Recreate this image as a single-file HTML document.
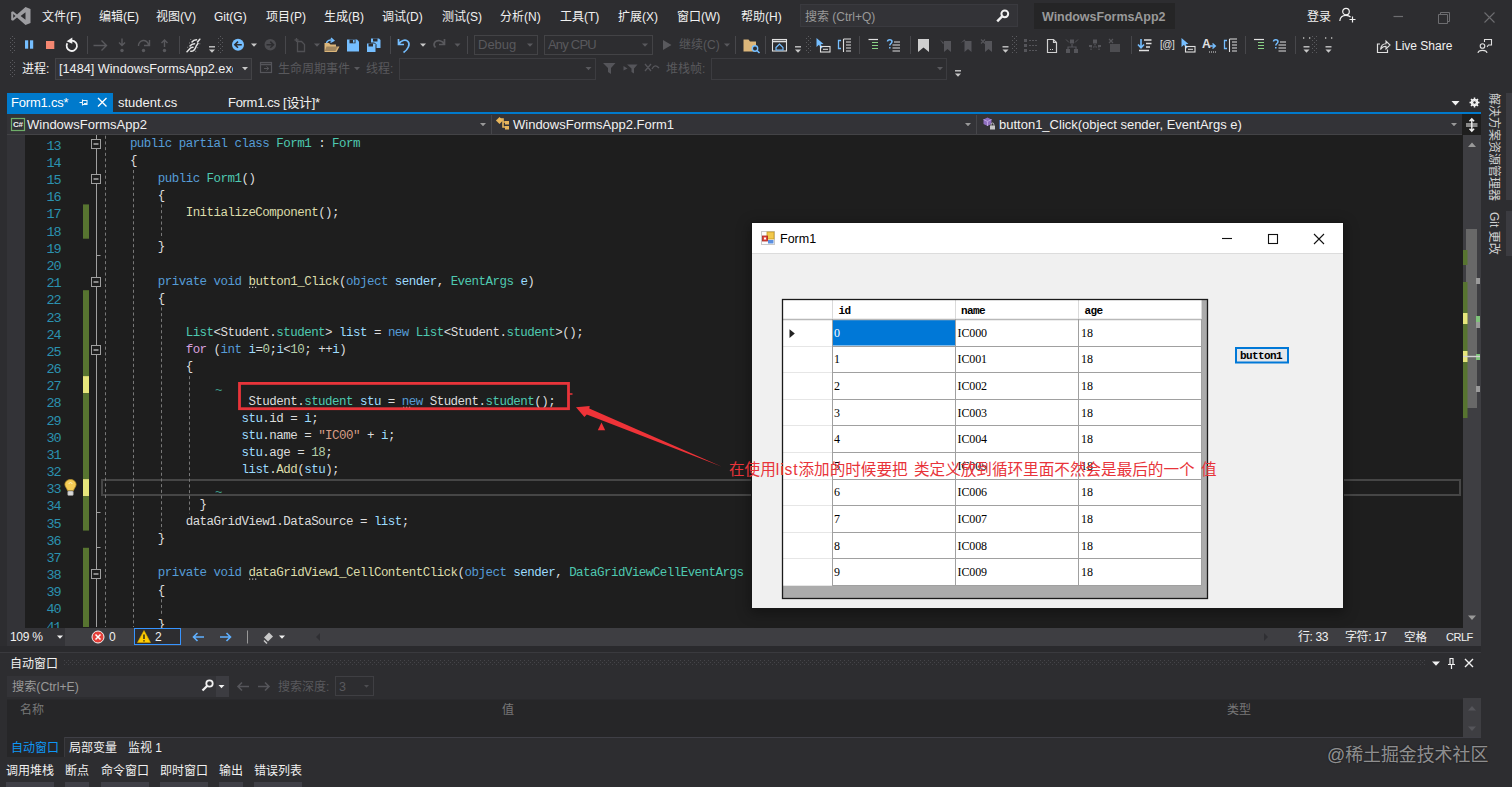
<!DOCTYPE html>
<html lang="zh-CN">
<head>
<meta charset="utf-8">
<title>Form1.cs - WindowsFormsApp2</title>
<style>
*{box-sizing:border-box;margin:0;padding:0}
html,body{width:1512px;height:787px;overflow:hidden}
body{background:#2d2d30;position:relative;font-family:"Liberation Sans","Noto Sans CJK SC",sans-serif;font-size:12px;color:#f1f1f1}
.abs{position:absolute}
.t{position:absolute;white-space:nowrap;line-height:16px}
/* menu */
#menubar .t{top:9px;font-size:12px;color:#f1f1f1}
/* editor */
#editor{position:absolute;left:25px;top:135px;width:1438px;height:493px;background:#1e1e1e;overflow:hidden}
#margin{position:absolute;left:7px;top:135px;width:18px;height:493px;background:#333337}
.ln{position:absolute;left:0;width:35.5px;text-align:right;color:#2b91af;font-family:"Liberation Mono",monospace;font-size:13.5px;letter-spacing:-1.1px;line-height:17px;height:17px}
.cl{position:absolute;left:0;white-space:pre;color:#dcdcdc;font-family:"Liberation Mono",monospace;font-size:12.5px;letter-spacing:-0.53px;line-height:17px;height:17px}
.k{color:#569cd6}.ty{color:#4ec9b0}.v{color:#9cdcfe}.s{color:#d69d85}.n{color:#b5cea8}.m{color:#dcdcaa}.c{color:#d8a0df}
</style>
</head>
<body>
<div id="menubar" class="abs" style="left:0;top:0;width:1512px;height:33px">
<svg class="abs" style="left:10px;top:6px" width="22" height="20" viewBox="0 0 22 20"><path d="M15.5 1 L20.5 3 V17 L15.5 19 L7 11.6 L3 14.8 L1.2 13.9 V6.1 L3 5.2 L7 8.4 Z M15.5 6.3 L10.6 10 L15.5 13.7 Z M3.2 7.9 V12.1 L5.5 10 Z" fill="#9d9da1" fill-rule="evenodd"/></svg>
<div class="t" style="left:42px">文件(F)</div>
<div class="t" style="left:99px">编辑(E)</div>
<div class="t" style="left:156px">视图(V)</div>
<div class="t" style="left:214px">Git(G)</div>
<div class="t" style="left:266px">项目(P)</div>
<div class="t" style="left:324px">生成(B)</div>
<div class="t" style="left:382px">调试(D)</div>
<div class="t" style="left:442px">测试(S)</div>
<div class="t" style="left:500px">分析(N)</div>
<div class="t" style="left:560px">工具(T)</div>
<div class="t" style="left:618px">扩展(X)</div>
<div class="t" style="left:677px">窗口(W)</div>
<div class="t" style="left:741px">帮助(H)</div>
<div class="abs" style="left:800px;top:4px;width:218px;height:23px;background:#333337;border:1px solid #3a3a3f"></div>
<div class="t" style="left:805px;color:#999">搜索 (Ctrl+Q)</div>
<svg class="abs" style="left:995px;top:8px" width="16" height="16" viewBox="0 0 16 16"><circle cx="9.8" cy="5.8" r="3.4" fill="none" stroke="#f1f1f1" stroke-width="2"/><path d="M7.4 8.2 L2.2 13.4" stroke="#f1f1f1" stroke-width="2.4"/></svg>
<div class="abs" style="left:1034px;top:3px;width:141px;height:26px;background:#252526"></div>
<div class="t" style="left:1042px;color:#999;font-weight:bold;font-size:12.5px;letter-spacing:-0.05px">WindowsFormsApp2</div>
<div class="t" style="left:1307px">登录</div>
<svg class="abs" style="left:1338px;top:6px" width="20" height="18" viewBox="0 0 20 18"><circle cx="8" cy="5.6" r="3.3" fill="none" stroke="#f1f1f1" stroke-width="1.2"/><path d="M1.8 15 C2.2 10.5 5 9.4 8 9.4 C10 9.4 11.6 10 12.6 11.2" fill="none" stroke="#f1f1f1" stroke-width="1.2"/><path d="M14.5 10.5 V16.5 M11.5 13.5 H17.5" stroke="#f1f1f1" stroke-width="1.2"/></svg>
<svg class="abs" style="left:1385px;top:6px" width="120" height="22" viewBox="0 0 120 22"><path d="M8.5 10.5 H18" stroke="#6d6d70" stroke-width="1.2"/><path d="M53.500 8.500 h9 v9 h-9 z M55.500 8.500 v-2 h9 v9 h-2" fill="none" stroke="#6d6d70" stroke-width="1"/><path d="M99.500 6.500 L109.500 16.500 M109.500 6.500 L99.500 16.500" stroke="#6d6d70" stroke-width="1.1"/></svg>
</div>

<div id="tb1" class="abs" style="left:0;top:33px;width:1512px;height:25px">
<svg class="abs" style="left:0;top:0" width="1512" height="25" viewBox="0 33 1512 25">
<defs>
<pattern id="grip" x="0" y="0" width="4" height="4" patternUnits="userSpaceOnUse"><rect x="0" y="0" width="1" height="1" fill="#5a5a5e"/><rect x="2" y="2" width="1" height="1" fill="#5a5a5e"/></pattern>
<g id="ovf"><path d="M0.500 0.300 H6.500" stroke="#c8c8c8" stroke-width="1.400"/><path d="M0.500 3 H6.500 L3.500 6.300 Z" fill="#c8c8c8"/></g>
<g id="dd"><path d="M0 0 H6 L3 3.300 Z" fill="#c8c8c8"/></g>
<g id="ddg"><path d="M0 0 H6 L3 3.300 Z" fill="#59595d"/></g>
</defs>
<!-- grips -->
<rect x="10" y="36" width="6" height="18" fill="url(#grip)"/>
<rect x="218" y="36" width="6" height="18" fill="url(#grip)"/>
<rect x="805" y="36" width="6" height="18" fill="url(#grip)"/>
<rect x="1012" y="36" width="6" height="18" fill="url(#grip)"/>
<rect x="1312" y="36" width="6" height="18" fill="url(#grip)"/>
<!-- separators -->
<g stroke="#47474b" stroke-width="1"><path d="M87.500 36 V54 M179.500 36 V54 M285.500 36 V54 M390.500 36 V54 M467.500 36 V54 M735.500 36 V54 M765.500 36 V54 M859.500 36 V54 M910.500 36 V54 M1131.500 36 V54 M1245.500 36 V54 M1295.500 36 V54"/></g>
<!-- pause stop restart -->
<rect x="25" y="40.300" width="3.200" height="8.400" fill="#75beff"/><rect x="30" y="40.300" width="3.200" height="8.400" fill="#75beff"/>
<rect x="46" y="41" width="8.300" height="8" fill="#f48771"/>
<path d="M67.300 43.200 A5.200 5.200 0 1 0 71.800 40.600" fill="none" stroke="#f1f1f1" stroke-width="1.800"/><path d="M72.300 37.400 V43.800 L66.600 41.200 Z" fill="#f1f1f1"/>
<!-- step icons (gray) -->
<g stroke="#59595d" stroke-width="1.400" fill="none"><path d="M93.500 45.500 H106.500 M101.500 40.500 L106.500 45.500 L101.500 50.500"/><path d="M122 38.500 V45 M119 42.500 L122 45.500 L125 42.500"/><path d="M138.500 46 A5 5 0 0 1 148.500 45 M149.500 40 V45.500 H144"/><path d="M164.500 47 V40 M161.500 43 L164.500 40 L167.500 43"/></g>
<g fill="#59595d"><circle cx="122" cy="50.500" r="1.700"/><circle cx="143.500" cy="50.500" r="1.700"/><circle cx="164.500" cy="50.500" r="1.700"/></g>
<!-- hatched icon -->
<g stroke="#e4e4e4" stroke-width="1.500" fill="none" stroke-linecap="round"><path d="M192 42 Q193.500 39.800 196.500 39.800 M197.500 42 L199.800 39.200"/><path d="M190 46 Q191.500 43.800 194.500 43.800 M196 46.300 L198 43.300"/><path d="M187 51.800 L190.500 48 Q191.500 47.200 193 47.200 M190.800 51.300 Q194 51.500 195.800 47.200"/></g><g fill="#8a8a8a"><rect x="190.200" y="39" width="1" height="1"/><rect x="189" y="42.500" width="1" height="1"/><rect x="187.200" y="46.800" width="1" height="1"/><rect x="199.300" y="43.300" width="1" height="1"/><rect x="197.200" y="47.200" width="1" height="1"/><rect x="195.200" y="50.800" width="1" height="1"/></g>
<use href="#ovf" x="208.500" y="46.500"/>
<!-- nav back/forward -->
<circle cx="238" cy="44.700" r="6" fill="#75beff"/><path d="M241.800 44.700 H235 M238 41.600 L234.800 44.700 L238 47.800" stroke="#2d2d30" stroke-width="1.600" fill="none"/>
<use href="#dd" x="251" y="43.500"/>
<circle cx="270.300" cy="44.700" r="5.800" fill="#4c4c50"/><path d="M266.500 44.700 H273.300 M270.300 41.600 L273.500 44.700 L270.300 47.800" stroke="#2d2d30" stroke-width="1.600" fill="none"/>
<!-- new item gray -->
<g fill="none" stroke="#505054" stroke-width="1.300"><path d="M297.500 41.500 h4 l3 3 v7 h-7 z"/><path d="M294.500 40 h4 M296.500 38 v4"/></g>
<use href="#ddg" x="314" y="43.500"/>
<!-- open folder -->
<path d="M324.500 52 V43 H329 L330.500 44.500 H336 V46.500 H339.500 L336.500 52 Z" fill="#dcb67a"/><path d="M326.500 46.500 H338 L335.500 51 H324.800 Z" fill="#2d2d30" opacity="0.350"/><path d="M326.500 43 C327 40.500 330 39.300 332.500 40.300 M331 38 L333.800 40.600 L330.500 42.300" stroke="#75beff" stroke-width="1.400" fill="none"/>
<!-- save -->
<path d="M347 39.500 H357 L359 41.500 V51.500 H347 Z" fill="#75beff"/><rect x="349.500" y="39.500" width="6" height="3.800" fill="#2d2d30"/><rect x="353" y="40" width="1.600" height="2.600" fill="#75beff"/><rect x="349.500" y="46.500" width="7" height="5" fill="#2d2d30" opacity="0"/>
<!-- save all -->
<path d="M371 38.500 H379 L380.500 40 V48 H371 Z" fill="#75beff"/><rect x="373" y="38.500" width="4.500" height="3" fill="#2d2d30"/>
<path d="M366.500 43 H374.500 L376 44.500 V52.500 H366.500 Z" fill="#75beff" stroke="#2d2d30" stroke-width="1"/><rect x="368.500" y="43.500" width="4.500" height="3" fill="#2d2d30"/>
<!-- undo / redo -->
<path d="M398.500 39 V44.500 H404 M398.800 44.200 C400.500 40.500 405.500 38.800 408 41.500 C410.500 44.500 408 49.500 403.500 52.500" stroke="#75beff" stroke-width="1.700" fill="none"/>
<use href="#dd" x="420" y="43.500"/>
<path d="M444.500 39 V44.500 H439 M444.200 44.200 C442.500 40.500 437.500 39.500 435 42 C433.500 44 434 46 435.500 47.500" stroke="#59595d" stroke-width="1.700" fill="none"/>
<use href="#ddg" x="454.500" y="43.500"/>
<!-- combos -->
<rect x="474.500" y="35.500" width="63" height="19" fill="#2d2d30" stroke="#434346"/><use href="#ddg" x="527" y="43.500"/>
<rect x="544.500" y="35.500" width="108" height="19" fill="#2d2d30" stroke="#434346"/><use href="#ddg" x="642" y="43.500"/>
<path d="M663 40 L671.500 45 L663 50 Z" fill="#59595d"/>
<use href="#ddg" x="724" y="43.500"/>
<!-- folder search -->
<path d="M743.500 51.500 V39.500 H748.500 L750 41.500 H756 V51.500 Z" fill="#dcb67a"/><circle cx="755" cy="48.500" r="2.700" fill="#2d2d30" stroke="#75beff" stroke-width="1.400"/><path d="M757 50.500 L759.500 53" stroke="#75beff" stroke-width="1.600"/>
<!-- window/home icon -->
<rect x="772.500" y="39.500" width="14" height="11.500" fill="none" stroke="#e0e0e0" stroke-width="1.100"/><path d="M772.500 41.500 H786.500" stroke="#e0e0e0" stroke-width="1.600"/><path d="M776 47.500 L779.500 44 L783 47.500 V50 H776 Z" fill="none" stroke="#75beff" stroke-width="1.200"/>
<use href="#ovf" x="794.500" y="46.500"/>
<!-- cursor + box -->
<path d="M816.500 38 V47 L819 44.800 L821 48.500 L822.500 47.800 L820.700 44.200 L823.500 44 Z" fill="#75beff"/><rect x="820.500" y="46.500" width="9.500" height="5.500" fill="none" stroke="#e0e0e0" stroke-width="1.100"/><path d="M823 49.300 H828" stroke="#e0e0e0"/>
<!-- bracket list -->
<path d="M841 40.500 H838.500 V48.500 H841" fill="none" stroke="#75beff" stroke-width="1.300"/><path d="M843.500 39 H851 M846 42 H851 M846 45 H851 M846 48 H851 M846 51 H851 M843.500 39 V52" stroke="#e0e0e0" stroke-width="1.100" fill="none"/>
<!-- indent -->
<path d="M868.500 39.500 H878 " stroke="#e0e0e0" stroke-width="1.200"/><path d="M872 42.500 H878 M872 45.500 H878 M872 48.500 H878" stroke="#89d185" stroke-width="1.200"/><path d="M868.500 51 H878" stroke="#e0e0e0" stroke-width="0"/>
<!-- ? list -->
<path d="M887.500 41.500 C887.500 39 892 39 892 41.500 C892 43.500 889.800 43.500 889.800 45.500 M889.800 47 V48.500" stroke="#75beff" stroke-width="1.500" fill="none"/><path d="M894 42 H900 M892.500 45 H900 M892.500 48 H900 M892.500 51 H900" stroke="#e0e0e0" stroke-width="1.200"/>
<!-- bookmarks -->
<path d="M918 39 H929 V52 L923.500 47.500 L918 52 Z" fill="#d0d0d0"/>
<g fill="#55555a"><path d="M944 41 H951 V52 L947.500 49 L944 52 Z"/><path d="M940 39.500 l4 3.500 l-1 1 z M964.500 41 H971.500 V52 L968 49 L964.500 52 Z"/><path d="M960.500 43 l4 -3.500 l1 1 z M985 41 H992 V52 L988.500 49 L985 52 Z"/><path d="M981 39.500 l4 4 M985 39.500 l-4 4" stroke="#55555a" stroke-width="1.200"/></g>
<use href="#ovf" x="1002" y="46.500"/>
<!-- gray list icon -->
<g fill="#55555a"><rect x="1024" y="39" width="3" height="3"/><rect x="1024" y="44" width="3" height="3"/><rect x="1024" y="49" width="3" height="3"/></g><path d="M1029 40.500 H1037.500 M1029 45.500 H1037.500 M1029 50.500 H1037.500" stroke="#55555a" stroke-width="1.200" stroke-dasharray="2 1"/>
<!-- doc icon -->
<path d="M1047.500 39.500 H1053.500 L1056.500 42.500 V52.500 H1047.500 Z M1053.500 39.500 V42.500 H1056.500" fill="none" stroke="#d0d0d0" stroke-width="1.200"/><path d="M1050 49.500 H1054" stroke="#d0d0d0" stroke-dasharray="1 1"/>
<!-- gray tree icons -->
<g fill="none" stroke="#55555a" stroke-width="1.200"><path d="M1072 44 V47 M1068 50 V47 H1076 V50"/><path d="M1095 44 V47 M1091 50 V47 H1099 V50" stroke-dasharray="1.500 1"/></g>
<g fill="#55555a"><rect x="1070" y="39.500" width="4" height="4"/><rect x="1066" y="49" width="4" height="4"/><rect x="1074" y="49" width="4" height="4"/><path d="M1066 39.500 l3 3 M1078 39.500 l-3 3" stroke="#55555a"/>
<rect x="1093" y="39.500" width="4" height="4"/><rect x="1089" y="45" width="3" height="2"/><rect x="1098" y="45" width="3" height="2"/>
<rect x="1110" y="44" width="10" height="8" opacity="0.800"/><path d="M1109 39 l4 4 M1113 39 l-4 4" stroke="#55555a" stroke-width="1.200"/></g>
<!-- right group -->
<path d="M1141 39 V47 M1138 44.500 L1141 47.800 L1144 44.500" stroke="#75beff" stroke-width="1.600" fill="none"/><path d="M1144 40 H1151.500 M1146 43.500 H1151.500 M1146 47 H1150 M1139 50.500 H1149" stroke="#e0e0e0" stroke-width="1.400"/>
<path d="M1181.500 38 V47 L1184 44.800 L1186 48.500 L1187.500 47.800 L1185.700 44.200 L1188.500 44 Z" fill="#75beff"/><rect x="1185.500" y="46.500" width="9.500" height="5.500" fill="none" stroke="#e0e0e0" stroke-width="1.100"/><path d="M1188 49.300 H1193" stroke="#e0e0e0"/>
<path d="M1209.500 46 H1215 M1212.500 43.500 L1215.300 46 L1212.500 48.500" stroke="#75beff" stroke-width="1.400" fill="none"/><path d="M1209 52 H1216" stroke="#e0e0e0" stroke-dasharray="1 1"/>
<path d="M1227 40.500 H1224.500 V48.500 H1227" fill="none" stroke="#75beff" stroke-width="1.300"/><path d="M1229.500 39 H1237 M1232 42 H1237 M1232 45 H1237 M1232 48 H1237 M1232 51 H1237 M1229.500 39 V52" stroke="#e0e0e0" stroke-width="1.100" fill="none"/>
<path d="M1254 39.500 H1264" stroke="#e0e0e0" stroke-width="1.200"/><path d="M1258 42.500 H1264 M1258 45.500 H1264 M1258 48.500 H1264" stroke="#89d185" stroke-width="1.200"/>
<path d="M1273.500 41.500 C1273.500 39 1278 39 1278 41.500 C1278 43.500 1275.800 43.500 1275.800 45.500 M1275.800 47 V48.500" stroke="#75beff" stroke-width="1.500" fill="none"/><path d="M1280 42 H1286 M1278.500 45 H1286 M1278.500 48 H1286 M1278.500 51 H1286" stroke="#e0e0e0" stroke-width="1.200"/>
<!-- overflow with dots -->
<g fill="#9a9a9a"><rect x="1303" y="37" width="1.300" height="2"/><rect x="1309" y="37" width="1.300" height="2"/><rect x="1325" y="37" width="1.300" height="2"/><rect x="1331" y="37" width="1.300" height="2"/></g>
<use href="#ovf" x="1303" y="46.500"/><use href="#ovf" x="1325" y="46.500"/>
<!-- live share -->
<path d="M1380 44 H1377.500 V52.500 H1387.500 V49.500" fill="none" stroke="#e0e0e0" stroke-width="1.200"/><path d="M1380.500 49.500 C1381 45.500 1383.500 43.800 1386 43.800 V41 L1390 45 L1386 49 V46.300 C1384 46.300 1382 47 1380.500 49.500 Z" fill="none" stroke="#e0e0e0" stroke-width="1.100"/>
<!-- feedback -->
<circle cx="1482.500" cy="46" r="2.300" fill="none" stroke="#e0e0e0" stroke-width="1.100"/><path d="M1478 53 C1478.500 49.500 1486.500 49.500 1487 53" fill="none" stroke="#e0e0e0" stroke-width="1.100"/><path d="M1484.500 42 V39.500 H1491.500 V45 H1488.500 L1487 46.800" fill="none" stroke="#e0e0e0" stroke-width="1.100"/>
</svg>
<div class="t" style="left:478px;top:4px;color:#59595d;font-size:13px">Debug</div>
<div class="t" style="left:548px;top:4px;color:#59595d;font-size:13px;letter-spacing:-0.8px">Any CPU</div>
<div class="t" style="left:679px;top:4px;color:#59595d;font-size:12px">继续(C)</div>
<div class="t" style="left:1160px;top:4px;color:#e0e0e0;font-size:10px;letter-spacing:-0.5px">[@]</div>
<div class="t" style="left:1202px;top:3px;color:#e0e0e0;font-size:12px;font-weight:bold">A</div>
<div class="t" style="left:1395px;top:5px;color:#f1f1f1;font-size:12px">Live Share</div>
</div>

<div id="tb2" class="abs" style="left:0;top:58px;width:1512px;height:24px">
<svg class="abs" style="left:0;top:0" width="1512" height="24" viewBox="0 58 1512 24">
<rect x="10" y="60" width="6" height="18" fill="url(#grip)"/>
<rect x="55.500" y="58.500" width="196" height="21" fill="#333337" stroke="#434346"/><use href="#dd" x="242" y="67"/>
<rect x="399.500" y="58.500" width="196" height="21" fill="#2d2d30" stroke="#3c3c40"/><use href="#ddg" x="585.500" y="67"/>
<rect x="711.500" y="58.500" width="235" height="21" fill="#2d2d30" stroke="#3c3c40"/><use href="#ddg" x="937" y="67"/>
<!-- lifecycle icon -->
<rect x="260.500" y="62.500" width="11" height="10" fill="none" stroke="#55555a" stroke-width="1.200"/><path d="M260.500 64.500 H271.500" stroke="#55555a" stroke-width="1.500"/><path d="M264 68.500 H268.500 M266.500 66.500 L268.800 68.500 L266.500 70.500" stroke="#55555a" fill="none"/>
<use href="#ddg" x="354" y="67"/>
<!-- filters -->
<g fill="#55555a"><path d="M603 63 H615.500 L611 68 V74 L608 72 V68 Z"/><path d="M627 64.500 H637.500 L634 68.500 V73.500 L631.500 72 V68.500 Z"/><path d="M623.500 66 l4 2.500 l-4 2 z"/></g>
<path d="M645 64 L651 71 M651 64 L645 71 M652 69 C654 65 656 65 659 68" stroke="#55555a" stroke-width="1.300" fill="none"/>
<use href="#ovf" x="954.500" y="70.500"/>
</svg>
<div class="t" style="left:22px;top:3px;color:#f1f1f1;font-size:12px">进程:</div>
<div class="t" style="left:59px;top:3px;color:#f1f1f1;font-size:12.700px;width:174px;overflow:hidden">[1484] WindowsFormsApp2.exe</div>
<div class="t" style="left:278px;top:3px;color:#59595d;font-size:12px">生命周期事件</div>
<div class="t" style="left:366px;top:3px;color:#59595d;font-size:12px">线程:</div>
<div class="t" style="left:666px;top:3px;color:#59595d;font-size:12px">堆栈帧:</div>
</div>

<div id="tabs" class="abs" style="left:0;top:93px;width:1512px;height:21px">
<div class="abs" style="left:7px;top:0;width:106px;height:20px;background:#007acc"></div>
<div class="abs" style="left:7px;top:19px;width:1474px;height:2px;background:#007acc"></div>
<div class="t" style="left:11px;top:2px;font-size:13px;letter-spacing:-0.2px;color:#fff">Form1.cs*</div>
<div class="t" style="left:118px;top:2px;font-size:13px;color:#f1f1f1">student.cs</div>
<div class="t" style="left:228px;top:2px;font-size:13px;letter-spacing:-0.3px;color:#f1f1f1">Form1.cs [设计]*</div>
<svg class="abs" style="left:0;top:0" width="1512" height="21" viewBox="0 93 1512 21">
<path d="M82.500 99.500 V105.500 M82.500 100.500 H87 V104.500 H82.500 M87 103.500 H84 M79.500 102.500 H82.500" fill="none" stroke="#e6f2fa" stroke-width="1.100"/>
<path d="M98 98 L106.500 106.500 M106.500 98 L98 106.500" stroke="#fff" stroke-width="1.400"/>
<path d="M1451.500 101 H1459.500 L1455.500 105.500 Z" fill="#f1f1f1"/>
<g transform="translate(1474.500 102.500)"><circle r="3" fill="none" stroke="#f1f1f1" stroke-width="1.700"/><path d="M0 -5 V5 M-5 0 H5 M-3.500 -3.500 L3.500 3.500 M-3.500 3.500 L3.500 -3.500" stroke="#f1f1f1" stroke-width="1.500"/><circle r="1.200" fill="#2d2d30"/></g>
</svg>
</div>

<div id="nav" class="abs" style="left:7px;top:114px;width:1474px;height:21px;background:#333337;border-bottom:1px solid #434346">
<div class="abs" style="left:484px;top:1px;width:1px;height:19px;background:#46464a"></div>
<div class="abs" style="left:969px;top:1px;width:1px;height:19px;background:#46464a"></div>
<div class="abs" style="left:1455px;top:0;width:19px;height:21px;background:#1e1e1e"></div>
<div class="t" style="left:20px;top:3px;font-size:13px;color:#f1f1f1">WindowsFormsApp2</div>
<div class="t" style="left:506px;top:3px;font-size:13px;color:#f1f1f1">WindowsFormsApp2.Form1</div>
<div class="t" style="left:992px;top:3px;font-size:13px;color:#f1f1f1">button1_Click(object sender, EventArgs e)</div>
<svg class="abs" style="left:0;top:0" width="1474" height="21" viewBox="7 114 1474 21">
<rect x="11.500" y="118.500" width="13" height="12" fill="none" stroke="#6fae6a" stroke-width="1.200"/>
<path d="M480 123 H486 L483 126.300 Z M965 123 H971 L968 126.300 Z M1451 123 H1457 L1454 126.300 Z" fill="#999"/>
<!-- class icon -->
<path d="M499 119 l4 0 l0 3 l3 0 M503 121 l0 6 l4 0" fill="none" stroke="#e8b65c" stroke-width="1.600"/><rect x="497" y="118" width="5" height="5" fill="#e8b65c" transform="rotate(45 499.500 120.500)"/><rect x="505" y="121" width="4" height="3.500" fill="#e8b65c"/><rect x="505" y="126" width="4" height="3.500" fill="#e8b65c"/>
<!-- method icon -->
<path d="M987.500 117.500 l4 2 v4.500 l-4 2 l-4 -2 v-4.500 z" fill="#8f6fc0"/><path d="M983.500 119.500 l4 2 l4 -2 M987.500 121.500 v4.500" stroke="#c6b0e6" stroke-width="0.800" fill="none"/><rect x="990" y="125.500" width="5" height="4" fill="#c8c8c8"/><path d="M991.200 125.500 v-1.200 a1.300 1.300 0 0 1 2.600 0 v1.200" fill="none" stroke="#c8c8c8" stroke-width="0.900"/>
<!-- split icon -->
<path d="M1466 124 H1477.500 M1466 126 H1477.500" stroke="#f1f1f1" stroke-width="1.100" fill="none"/><path d="M1471.800 119 V131 M1469.500 121.300 L1471.800 118.800 L1474.100 121.300 M1469.500 128.700 L1471.800 131.200 L1474.100 128.700" stroke="#f1f1f1" stroke-width="1.400" fill="none"/>
</svg>
<div class="t" style="left:6px;top:4px;font-size:8px;font-weight:bold;color:#f1f1f1;letter-spacing:-0.300px;line-height:14px">C#</div>
</div>

<!--EDITOR_S-->
<div id="margin"></div>
<div id="editor">
<div class="abs" style="left:76px;top:343.5px;width:1360px;height:17px;border:2px solid #464646"></div>
<div class="ln" style="top:2.80px">13</div>
<div class="cl" style="left:77px;top:1.20px">    <span class="k">public partial class</span> <span class="ty">Form1</span> : <span class="ty">Form</span></div>
<div class="ln" style="top:19.97px">14</div>
<div class="cl" style="left:77px;top:18.37px">    {</div>
<div class="ln" style="top:37.14px">15</div>
<div class="cl" style="left:77px;top:35.54px">        <span class="k">public</span> <span class="ty">Form1</span>()</div>
<div class="ln" style="top:54.31px">16</div>
<div class="cl" style="left:77px;top:52.71px">        {</div>
<div class="ln" style="top:71.48px">17</div>
<div class="cl" style="left:77px;top:69.88px">            <span class="m">InitializeComponent</span>();</div>
<div class="ln" style="top:88.65px">18</div>
<div class="ln" style="top:105.82px">19</div>
<div class="cl" style="left:77px;top:104.22px">        }</div>
<div class="ln" style="top:122.99px">20</div>
<div class="ln" style="top:140.16px">21</div>
<div class="cl" style="left:77px;top:138.56px">        <span class="k">private void</span> <span class="m">button1_Click</span>(<span class="k">object</span> <span class="v">sender</span>, <span class="ty">EventArgs</span> <span class="v">e</span>)</div>
<div class="ln" style="top:157.33px">22</div>
<div class="cl" style="left:77px;top:155.73px">        {</div>
<div class="ln" style="top:174.50px">23</div>
<div class="ln" style="top:191.67px">24</div>
<div class="cl" style="left:77px;top:190.07px">            <span class="ty">List</span>&lt;Student.<span class="ty">student</span>&gt; <span class="v">list</span> = <span class="k">new</span> <span class="ty">List</span>&lt;Student.<span class="ty">student</span>&gt;();</div>
<div class="ln" style="top:208.84px">25</div>
<div class="cl" style="left:77px;top:207.24px">            <span class="c">for</span> (<span class="k">int</span> <span class="v">i</span>=<span class="n">0</span>;<span class="v">i</span>&lt;<span class="n">10</span>; ++<span class="v">i</span>)</div>
<div class="ln" style="top:226.01px">26</div>
<div class="cl" style="left:77px;top:224.41px">            {</div>
<div class="ln" style="top:243.18px">27</div>
<div class="ln" style="top:260.35px">28</div>
<div class="cl" style="left:77px;top:258.75px">                     Student.<span class="ty">student</span> <span class="v">stu</span> = <span class="k">new</span> Student.<span class="ty">student</span>();</div>
<div class="ln" style="top:277.52px">29</div>
<div class="cl" style="left:77px;top:275.92px">                    <span class="v">stu</span>.id = <span class="v">i</span>;</div>
<div class="ln" style="top:294.69px">30</div>
<div class="cl" style="left:77px;top:293.09px">                    <span class="v">stu</span>.name = <span class="s">"IC00"</span> + <span class="v">i</span>;</div>
<div class="ln" style="top:311.86px">31</div>
<div class="cl" style="left:77px;top:310.26px">                    <span class="v">stu</span>.age = <span class="n">18</span>;</div>
<div class="ln" style="top:329.03px">32</div>
<div class="cl" style="left:77px;top:327.43px">                    <span class="v">list</span>.<span class="m">Add</span>(<span class="v">stu</span>);</div>
<div class="ln" style="top:346.20px">33</div>
<div class="ln" style="top:363.37px">34</div>
<div class="cl" style="left:77px;top:361.77px">              }</div>
<div class="ln" style="top:380.54px">35</div>
<div class="cl" style="left:77px;top:378.94px">            dataGridView1.DataSource = <span class="v">list</span>;</div>
<div class="ln" style="top:397.71px">36</div>
<div class="cl" style="left:77px;top:396.11px">        }</div>
<div class="ln" style="top:414.88px">37</div>
<div class="ln" style="top:432.05px">38</div>
<div class="cl" style="left:77px;top:430.45px">        <span class="k">private void</span> <span class="m">dataGridView1_CellContentClick</span>(<span class="k">object</span> <span class="v">sender</span>, <span class="ty">DataGridViewCellEventArgs</span></div>
<div class="ln" style="top:449.22px">39</div>
<div class="cl" style="left:77px;top:447.62px">        {</div>
<div class="ln" style="top:466.39px">40</div>
<div class="ln" style="top:483.56px">41</div>
<div class="cl" style="left:77px;top:481.96px">        }</div>
<svg class="abs" style="left:0;top:0" width="1438" height="492" viewBox="25 135 1438 492">
<rect x="83" y="204.4" width="6" height="34.3" fill="#577430"/>
<rect x="83" y="290.2" width="6" height="85.9" fill="#577430"/>
<rect x="83" y="376.1" width="6" height="17.2" fill="#e6e67c"/>
<rect x="83" y="393.2" width="6" height="85.9" fill="#577430"/>
<rect x="83" y="479.1" width="6" height="17.2" fill="#e6e67c"/>
<rect x="83" y="496.3" width="6" height="34.3" fill="#577430"/>
<rect x="83" y="547.8" width="6" height="85.9" fill="#577430"/>
<path d="M96.500 135 V627" stroke="#a0a0a0" stroke-width="1"/>
<rect x="91.500" y="139.5" width="9" height="9" fill="#1e1e1e" stroke="#a0a0a0"/><path d="M93.500 144.0 H98.500" stroke="#d0d0d0" stroke-width="1.200"/>
<rect x="91.500" y="174.5" width="9" height="9" fill="#1e1e1e" stroke="#a0a0a0"/><path d="M93.500 179.0 H98.500" stroke="#d0d0d0" stroke-width="1.200"/>
<rect x="91.500" y="277.5" width="9" height="9" fill="#1e1e1e" stroke="#a0a0a0"/><path d="M93.500 282.0 H98.500" stroke="#d0d0d0" stroke-width="1.200"/>
<rect x="91.500" y="345.5" width="9" height="9" fill="#1e1e1e" stroke="#a0a0a0"/><path d="M93.500 350.0 H98.500" stroke="#d0d0d0" stroke-width="1.200"/>
<rect x="91.500" y="569.5" width="9" height="9" fill="#1e1e1e" stroke="#a0a0a0"/><path d="M93.500 574.0 H98.500" stroke="#d0d0d0" stroke-width="1.200"/>
<path d="M96.500 255.5 H100.500" stroke="#a0a0a0"/>
<path d="M96.500 512.5 H100.500" stroke="#a0a0a0"/>
<path d="M96.500 547.5 H100.500" stroke="#a0a0a0"/>
<path d="M105.5 135.7 V633.6" stroke="#787878" stroke-width="1" stroke-dasharray="3.100 2.600"/>
<path d="M133.5 170.0 V633.6" stroke="#787878" stroke-width="1" stroke-dasharray="3.100 2.600"/>
<path d="M161.5 204.4 V238.7" stroke="#787878" stroke-width="1" stroke-dasharray="3.100 2.600"/>
<path d="M161.5 307.4 V530.6" stroke="#787878" stroke-width="1" stroke-dasharray="3.100 2.600"/>
<path d="M161.5 599.3 V616.5" stroke="#787878" stroke-width="1" stroke-dasharray="3.100 2.600"/>
<path d="M189.5 376.1 V513.4" stroke="#787878" stroke-width="1" stroke-dasharray="3.100 2.600"/>
<path d="M249.0 287.3 h8" stroke="#b4b4b4" stroke-width="1.300" stroke-dasharray="1.300 1.700"/>
<path d="M403.0 407.4 h8" stroke="#b4b4b4" stroke-width="1.300" stroke-dasharray="1.300 1.700"/>
<path d="M249.0 579.2 h8" stroke="#b4b4b4" stroke-width="1.300" stroke-dasharray="1.300 1.700"/>
<g transform="translate(70.500 487)"><path d="M0 -7.500 C-3.800 -7.500 -5.600 -4.800 -5.600 -2.500 C-5.600 0 -3.500 1.200 -3 3.500 H3 C3.500 1.200 5.600 0 5.600 -2.500 C5.600 -4.800 3.800 -7.500 0 -7.500 Z" fill="#f5cc56" stroke="#b8902a" stroke-width="0.800"/><rect x="-2.800" y="4" width="5.600" height="4.500" rx="1" fill="#d8d8d8" stroke="#8a8a8a" stroke-width="0.600"/><path d="M-1.500 -3 C-1.500 -5 1.500 -5 1.500 -3" stroke="#fff6c8" stroke-width="1" fill="none"/></g>
</svg>
<div class="cl" style="left:190px;top:248.0px;color:#3f9c8a">~</div>
<div class="cl" style="left:190px;top:350.0px;color:#3f9c8a">~</div>
</div>
<!--EDITOR_E-->
<div id="edscroll" class="abs" style="left:1463px;top:135px;width:18px;height:493px;background:#3e3e42">
<svg class="abs" style="left:0;top:0" width="18" height="492" viewBox="1463 135 18 492">
<path d="M1468 147 L1472 142.500 L1476 147 Z M1468 615.500 L1472 620 L1476 615.500 Z" fill="#999"/>
<rect x="1466" y="229" width="11" height="179" fill="#686868"/>
<rect x="1463" y="250" width="4.500" height="15" fill="#577430"/><rect x="1463" y="282" width="4.500" height="136" fill="#577430"/>
<rect x="1463" y="313" width="4.500" height="11" fill="#e6e67c"/><rect x="1463" y="351" width="4.500" height="11" fill="#e6e67c"/>
<rect x="1476" y="316" width="4" height="6" fill="#7fc27a"/><rect x="1476" y="354" width="4" height="6" fill="#7fc27a"/>
<rect x="1476" y="278" width="4" height="6" fill="#9a9a9a"/><rect x="1476" y="322" width="4" height="6" fill="#9a9a9a"/><rect x="1476" y="386" width="4" height="6" fill="#9a9a9a"/>
<path d="M1463 356.500 H1480" stroke="#d0d0d0" stroke-width="1.400"/>
</svg>
</div>
<div class="abs" style="left:0;top:646px;width:1481px;height:6px;background:#2a2a2d"></div><div class="abs" style="left:0;top:652px;width:1481px;height:1px;background:#3a3a3e"></div>
<div id="edstatus" class="abs" style="left:7px;top:628px;width:1474px;height:18px;background:#3e3e42">
<div class="abs" style="left:0;top:0;width:58px;height:18px;background:#333337"></div>
<div class="t" style="left:3px;top:1px;font-size:12px;letter-spacing:-0.3px">109 %</div>
<div class="t" style="left:102px;top:1px;font-size:12px">0</div>
<div class="abs" style="left:127px;top:0;width:47px;height:17px;background:#2d2d30;border:1px solid #3794ff"></div>
<div class="t" style="left:148px;top:1px;font-size:12px">2</div>
<div class="t" style="left:1291px;top:1px;font-size:12px;letter-spacing:-0.4px">行: 33</div>
<div class="t" style="left:1338px;top:1px;font-size:12px;letter-spacing:-0.4px">字符: 17</div>
<div class="t" style="left:1397px;top:1px;font-size:11.500px">空格</div>
<div class="t" style="left:1439px;top:1px;font-size:11px;letter-spacing:-0.5px">CRLF</div>
<svg class="abs" style="left:0;top:0" width="1474" height="20" viewBox="7 627.5 1474 20">
<path d="M57 635 H63 L60 638.300 Z" fill="#f1f1f1"/>
<circle cx="98" cy="636.500" r="6" fill="#e5403a" stroke="#f3f3f3" stroke-width="1"/><path d="M95.500 634 L100.500 639 M100.500 634 L95.500 639" stroke="#fff" stroke-width="1.500"/>
<path d="M144 630 L150.500 642 H137.500 Z" fill="#ffcc00" stroke="#d9a800" stroke-width="0.600"/><path d="M144 634 V638.500 M144 639.700 V641" stroke="#1e1e1e" stroke-width="1.400"/>
<path d="M204 636.500 H193.500 M197.500 632.500 L193.500 636.500 L197.500 640.500" stroke="#5fb0ff" stroke-width="1.600" fill="none"/>
<path d="M220 636.500 H230.500 M226.500 632.500 L230.500 636.500 L226.500 640.500" stroke="#5fb0ff" stroke-width="1.600" fill="none"/>
<path d="M247.500 630 V643" stroke="#999" stroke-width="1"/>
<path d="M264 637 L269 632 L273 636 L268 641 Z" fill="#c8c8c8"/><path d="M264 640 l3 3" stroke="#c8c8c8" stroke-width="1.500"/>
<path d="M279 635 H285 L282 638.300 Z" fill="#f1f1f1"/>
<path d="M320 632.500 V640.500 L316 636.500 Z M1264 632.500 V640.500 L1268 636.500 Z" fill="#2f2f33"/>
</svg>
</div>

<div id="autos" class="abs" style="left:0;top:655px;width:1481px;height:105px">
<svg class="abs" style="left:0;top:0" width="1481" height="105" viewBox="0 655 1481 105">
<defs><pattern id="grip2" x="0" y="0" width="4" height="4" patternUnits="userSpaceOnUse"><rect x="0" y="0" width="1" height="1" fill="#444448"/><rect x="2" y="2" width="1" height="1" fill="#444448"/></pattern></defs>
<rect x="63" y="660" width="1362" height="5" fill="url(#grip2)"/>
<path d="M1432 661.500 H1440 L1436 665.800 Z" fill="#f1f1f1"/>
<path d="M1449.500 658.500 H1453.500 M1450 658.500 V664.500 H1453 V658.500 M1448 664.500 H1455 M1451.500 664.500 V669" stroke="#f1f1f1" stroke-width="1.200" fill="none"/>
<path d="M1465 659 L1473 667 M1473 659 L1465 667" stroke="#f1f1f1" stroke-width="1.400"/>
<rect x="7" y="699.500" width="1456" height="37.500" fill="#262628"/>
<rect x="7" y="676" width="222" height="21" fill="#333337"/><rect x="216" y="676" width="13" height="21" fill="#3c3c41"/>
<circle cx="209.500" cy="683.500" r="3.200" fill="none" stroke="#f1f1f1" stroke-width="1.800"/><path d="M207.300 685.700 L202.500 690.500" stroke="#f1f1f1" stroke-width="2.200"/>
<path d="M218.500 685 H224.500 L221.500 688.300 Z" fill="#f1f1f1"/>
<path d="M249 686.500 H238 M242 682.500 L238 686.500 L242 690.500 M258 686.500 H269 M265 682.500 L269 686.500 L265 690.500" stroke="#55555a" stroke-width="1.600" fill="none"/>
<rect x="335.500" y="676.500" width="38" height="19" fill="#2d2d30" stroke="#3f3f43"/><path d="M364 685 H369 L366.500 687.800 Z" fill="#4d4d51"/>
<rect x="1463" y="698" width="18" height="39" fill="#3e3e42"/><path d="M1468 710.500 L1472 706 L1476 710.500 Z M1468 726.500 L1472 731 L1476 726.500 Z" fill="#55555a"/>
<path d="M64 737.500 H1481" stroke="#3f3f46"/><rect x="7" y="737" width="57" height="20" fill="#262628"/><path d="M64.500 737 V757" stroke="#3a3a3e"/>

</svg>
<div class="t" style="left:10px;top:1px;font-size:12px;color:#f1f1f1">自动窗口</div>
<div class="t" style="left:12px;top:24px;font-size:12.200px;color:#999">搜索(Ctrl+E)</div>
<div class="t" style="left:278px;top:24px;font-size:12px;color:#59595d">搜索深度:</div>
<div class="t" style="left:339px;top:24px;font-size:12.500px;color:#59595d">3</div>
<div class="t" style="left:20px;top:47px;font-size:12px;color:#777">名称</div>
<div class="t" style="left:502px;top:47px;font-size:12px;color:#777">值</div>
<div class="t" style="left:1227px;top:47px;font-size:12px;color:#777">类型</div>
<div class="t" style="left:11px;top:85px;font-size:12px;color:#0e97f5">自动窗口</div>
<div class="t" style="left:69px;top:85px;font-size:12px;color:#f1f1f1">局部变量</div>
<div class="t" style="left:128px;top:85px;font-size:12px;color:#f1f1f1">监视 1</div>
</div>

<div id="bottomtabs" class="abs" style="left:0;top:760px;width:1481px;height:27px">
<div class="t" style="left:6px;top:3px;font-size:12px">调用堆栈</div>
<div class="t" style="left:65px;top:3px;font-size:12px">断点</div>
<div class="t" style="left:101px;top:3px;font-size:12px">命令窗口</div>
<div class="t" style="left:160px;top:3px;font-size:12px">即时窗口</div>
<div class="t" style="left:219px;top:3px;font-size:12px">输出</div>
<div class="t" style="left:254px;top:3px;font-size:12px">错误列表</div>
<div class="abs" style="left:6px;top:22px;width:48px;height:5px;background:#3f3f46"></div>
<div class="abs" style="left:65px;top:22px;width:24px;height:5px;background:#3f3f46"></div>
<div class="abs" style="left:101px;top:22px;width:48px;height:5px;background:#3f3f46"></div>
<div class="abs" style="left:160px;top:22px;width:48px;height:5px;background:#3f3f46"></div>
<div class="abs" style="left:219px;top:22px;width:24px;height:5px;background:#3f3f46"></div>
<div class="abs" style="left:254px;top:22px;width:48px;height:5px;background:#3f3f46"></div>
</div>

<div id="rightstrip" class="abs" style="left:1481px;top:84px;width:31px;height:703px">
<div class="abs" style="left:25px;top:9px;width:6px;height:107px;background:#3b3b40"></div>
<div class="abs" style="left:25px;top:127px;width:6px;height:45px;background:#3b3b40"></div>
<div class="abs" style="left:5px;top:9px;width:16px;writing-mode:vertical-rl;text-orientation:sideways;font-size:12px;line-height:16px;color:#d0d0d0;white-space:nowrap">解决方案资源管理器</div>
<div class="abs" style="left:5px;top:128px;width:16px;writing-mode:vertical-rl;text-orientation:sideways;font-size:12px;line-height:16px;color:#d0d0d0;white-space:nowrap">Git 更改</div>
</div>

<!--FORM_S-->
<div id="form1" class="abs" style="left:752px;top:223px;width:591px;height:385px;background:#f0f0f0;box-shadow:0 0 0 1px #171717,0 3px 12px 2px rgba(0,0,0,0.35)">
<div class="abs" style="left:0;top:0;width:100%;height:31px;background:#fff;border-bottom:1px solid #dcdcdc"></div>
<div class="t" style="left:28px;top:8px;font-size:12.500px;color:#000">Form1</div>
<svg class="abs" style="left:0;top:0" width="591" height="385" viewBox="752 223 591 385">
<rect x="761.500" y="231.500" width="13" height="13" fill="#fdfdfd" stroke="#c9c9c9"/><rect x="767" y="232" width="7" height="7" fill="#f2c94c" stroke="#c79a1e" stroke-width="0.800"/><rect x="762.500" y="236" width="5" height="5" fill="#e0483e" stroke="#a8261f" stroke-width="0.800"/><rect x="768" y="240" width="5.500" height="3.500" fill="#5b8fe0"/><rect x="764" y="237.500" width="2" height="2" fill="#fff"/>
<path d="M1222 238.500 H1232" stroke="#111" stroke-width="1.100"/><rect x="1268.500" y="234.500" width="9" height="9" fill="none" stroke="#111" stroke-width="1.100"/><path d="M1314 234 L1324 244 M1324 234 L1314 244" stroke="#111" stroke-width="1.100"/>
<rect x="782" y="299" width="426" height="300" fill="#ababab"/>
<rect x="783" y="300" width="418" height="285" fill="#fff"/>
<rect x="833" y="319" width="122.500" height="26.500" fill="#0078d7"/>
<path d="M783 319.5 H1201" stroke="#b8b8b8" stroke-width="1.400"/>
<path d="M783 346.5 H832" stroke="#e6e6e6"/><path d="M832 346.5 H1201" stroke="#a0a0a0"/>
<path d="M783 372.5 H832" stroke="#e6e6e6"/><path d="M832 372.5 H1201" stroke="#a0a0a0"/>
<path d="M783 399.5 H832" stroke="#e6e6e6"/><path d="M832 399.5 H1201" stroke="#a0a0a0"/>
<path d="M783 425.5 H832" stroke="#e6e6e6"/><path d="M832 425.5 H1201" stroke="#a0a0a0"/>
<path d="M783 452.5 H832" stroke="#e6e6e6"/><path d="M832 452.5 H1201" stroke="#a0a0a0"/>
<path d="M783 479.5 H832" stroke="#e6e6e6"/><path d="M832 479.5 H1201" stroke="#a0a0a0"/>
<path d="M783 505.5 H832" stroke="#e6e6e6"/><path d="M832 505.5 H1201" stroke="#a0a0a0"/>
<path d="M783 532.5 H832" stroke="#e6e6e6"/><path d="M832 532.5 H1201" stroke="#a0a0a0"/>
<path d="M783 558.5 H832" stroke="#e6e6e6"/><path d="M832 558.5 H1201" stroke="#a0a0a0"/>
<path d="M783 585.5 H832" stroke="#e6e6e6"/><path d="M832 585.5 H1201" stroke="#a0a0a0"/>
<path d="M832.5 300 V319" stroke="#dadada"/><path d="M832.5 319 V585.500" stroke="#a0a0a0"/>
<path d="M955.5 300 V319" stroke="#dadada"/><path d="M955.5 319 V585.500" stroke="#a0a0a0"/>
<path d="M1078.5 300 V319" stroke="#dadada"/><path d="M1078.5 319 V585.500" stroke="#a0a0a0"/>
<path d="M1201.5 300 V319" stroke="#dadada"/><path d="M1201.5 319 V585.500" stroke="#a0a0a0"/>
<rect x="782.500" y="299.500" width="425" height="299" fill="none" stroke="#1a1a1a" stroke-width="1.300"/>
<path d="M789.500 329.200 V338 L794.800 333.600 Z" fill="#222"/>
<rect x="1236" y="348" width="52" height="14.500" fill="#e3e6ea" stroke="#0078d7" stroke-width="2"/>
</svg>
<div class="t" style="left:86.5px;top:79.5px;font-family:'Liberation Serif','Noto Serif CJK SC',serif;color:#000;font-family:'Liberation Mono',monospace;font-weight:bold;font-size:11px;letter-spacing:-0.6px;">id</div>
<div class="t" style="left:209.0px;top:79.5px;font-family:'Liberation Serif','Noto Serif CJK SC',serif;color:#000;font-family:'Liberation Mono',monospace;font-weight:bold;font-size:11px;letter-spacing:-0.6px;">name</div>
<div class="t" style="left:332.5px;top:79.5px;font-family:'Liberation Serif','Noto Serif CJK SC',serif;color:#000;font-family:'Liberation Mono',monospace;font-weight:bold;font-size:11px;letter-spacing:-0.6px;">age</div>
<div class="t" style="left:82.0px;top:101.8px;font-family:'Liberation Serif','Noto Serif CJK SC',serif;color:#000;font-size:12px;letter-spacing:-0.1px;color:#fff;">0</div>
<div class="t" style="left:205.5px;top:101.8px;font-family:'Liberation Serif','Noto Serif CJK SC',serif;color:#000;font-size:12px;letter-spacing:-0.1px;">IC000</div>
<div class="t" style="left:329.0px;top:101.8px;font-family:'Liberation Serif','Noto Serif CJK SC',serif;color:#000;font-size:12px;letter-spacing:-0.1px;">18</div>
<div class="t" style="left:82.0px;top:128.4px;font-family:'Liberation Serif','Noto Serif CJK SC',serif;color:#000;font-size:12px;letter-spacing:-0.1px;">1</div>
<div class="t" style="left:205.5px;top:128.4px;font-family:'Liberation Serif','Noto Serif CJK SC',serif;color:#000;font-size:12px;letter-spacing:-0.1px;">IC001</div>
<div class="t" style="left:329.0px;top:128.4px;font-family:'Liberation Serif','Noto Serif CJK SC',serif;color:#000;font-size:12px;letter-spacing:-0.1px;">18</div>
<div class="t" style="left:82.0px;top:155.0px;font-family:'Liberation Serif','Noto Serif CJK SC',serif;color:#000;font-size:12px;letter-spacing:-0.1px;">2</div>
<div class="t" style="left:205.5px;top:155.0px;font-family:'Liberation Serif','Noto Serif CJK SC',serif;color:#000;font-size:12px;letter-spacing:-0.1px;">IC002</div>
<div class="t" style="left:329.0px;top:155.0px;font-family:'Liberation Serif','Noto Serif CJK SC',serif;color:#000;font-size:12px;letter-spacing:-0.1px;">18</div>
<div class="t" style="left:82.0px;top:181.6px;font-family:'Liberation Serif','Noto Serif CJK SC',serif;color:#000;font-size:12px;letter-spacing:-0.1px;">3</div>
<div class="t" style="left:205.5px;top:181.6px;font-family:'Liberation Serif','Noto Serif CJK SC',serif;color:#000;font-size:12px;letter-spacing:-0.1px;">IC003</div>
<div class="t" style="left:329.0px;top:181.6px;font-family:'Liberation Serif','Noto Serif CJK SC',serif;color:#000;font-size:12px;letter-spacing:-0.1px;">18</div>
<div class="t" style="left:82.0px;top:208.2px;font-family:'Liberation Serif','Noto Serif CJK SC',serif;color:#000;font-size:12px;letter-spacing:-0.1px;">4</div>
<div class="t" style="left:205.5px;top:208.2px;font-family:'Liberation Serif','Noto Serif CJK SC',serif;color:#000;font-size:12px;letter-spacing:-0.1px;">IC004</div>
<div class="t" style="left:329.0px;top:208.2px;font-family:'Liberation Serif','Noto Serif CJK SC',serif;color:#000;font-size:12px;letter-spacing:-0.1px;">18</div>
<div class="t" style="left:82.0px;top:234.8px;font-family:'Liberation Serif','Noto Serif CJK SC',serif;color:#000;font-size:12px;letter-spacing:-0.1px;">5</div>
<div class="t" style="left:205.5px;top:234.8px;font-family:'Liberation Serif','Noto Serif CJK SC',serif;color:#000;font-size:12px;letter-spacing:-0.1px;">IC005</div>
<div class="t" style="left:329.0px;top:234.8px;font-family:'Liberation Serif','Noto Serif CJK SC',serif;color:#000;font-size:12px;letter-spacing:-0.1px;">18</div>
<div class="t" style="left:82.0px;top:261.4px;font-family:'Liberation Serif','Noto Serif CJK SC',serif;color:#000;font-size:12px;letter-spacing:-0.1px;">6</div>
<div class="t" style="left:205.5px;top:261.4px;font-family:'Liberation Serif','Noto Serif CJK SC',serif;color:#000;font-size:12px;letter-spacing:-0.1px;">IC006</div>
<div class="t" style="left:329.0px;top:261.4px;font-family:'Liberation Serif','Noto Serif CJK SC',serif;color:#000;font-size:12px;letter-spacing:-0.1px;">18</div>
<div class="t" style="left:82.0px;top:288.0px;font-family:'Liberation Serif','Noto Serif CJK SC',serif;color:#000;font-size:12px;letter-spacing:-0.1px;">7</div>
<div class="t" style="left:205.5px;top:288.0px;font-family:'Liberation Serif','Noto Serif CJK SC',serif;color:#000;font-size:12px;letter-spacing:-0.1px;">IC007</div>
<div class="t" style="left:329.0px;top:288.0px;font-family:'Liberation Serif','Noto Serif CJK SC',serif;color:#000;font-size:12px;letter-spacing:-0.1px;">18</div>
<div class="t" style="left:82.0px;top:314.6px;font-family:'Liberation Serif','Noto Serif CJK SC',serif;color:#000;font-size:12px;letter-spacing:-0.1px;">8</div>
<div class="t" style="left:205.5px;top:314.6px;font-family:'Liberation Serif','Noto Serif CJK SC',serif;color:#000;font-size:12px;letter-spacing:-0.1px;">IC008</div>
<div class="t" style="left:329.0px;top:314.6px;font-family:'Liberation Serif','Noto Serif CJK SC',serif;color:#000;font-size:12px;letter-spacing:-0.1px;">18</div>
<div class="t" style="left:82.0px;top:341.2px;font-family:'Liberation Serif','Noto Serif CJK SC',serif;color:#000;font-size:12px;letter-spacing:-0.1px;">9</div>
<div class="t" style="left:205.5px;top:341.2px;font-family:'Liberation Serif','Noto Serif CJK SC',serif;color:#000;font-size:12px;letter-spacing:-0.1px;">IC009</div>
<div class="t" style="left:329.0px;top:341.2px;font-family:'Liberation Serif','Noto Serif CJK SC',serif;color:#000;font-size:12px;letter-spacing:-0.1px;">18</div>
<div class="t" style="left:488.0px;top:125.0px;font-family:'Liberation Serif','Noto Serif CJK SC',serif;color:#000;font-family:'Liberation Mono',monospace;font-weight:bold;font-size:11px;letter-spacing:-0.6px;">button1</div>
</div>
<!--FORM_E-->
<!--ANNOT_S-->
<svg id="annot" class="abs" style="left:0;top:370px" width="1512" height="130" viewBox="0 370 1512 130">
<rect x="239.500" y="383.400" width="329" height="25.300" fill="none" stroke="#e8343a" stroke-width="2.800"/>
<path d="M568 394 H572.500" stroke="#e8343a" stroke-width="1.500"/>
<path d="M576 407.300 L589.700 406 L589.300 408.600 L722 466.800 L586.800 414.600 L584.400 417 Z" fill="#ee3338"/>
<path d="M601.500 422.500 L605.200 430.200 H597.800 Z" fill="#ee3338"/>
</svg>
<div class="t" style="left:729px;top:459.500px;font-size:15.600px;line-height:20px;word-spacing:2px;color:#e8343a">在使用<span style="letter-spacing:0.9px">list</span>添加的时候要把 类定义放到循环里面不然会是最后的一个 值</div>
<!--ANNOT_E-->
<div class="t" style="left:1327px;top:742.500px;font-size:17.900px;line-height:24px;color:rgba(255,255,255,0.52);text-shadow:0 0 2px rgba(0,0,0,0.6)">@稀土掘金技术社区</div>

</body>
</html>
